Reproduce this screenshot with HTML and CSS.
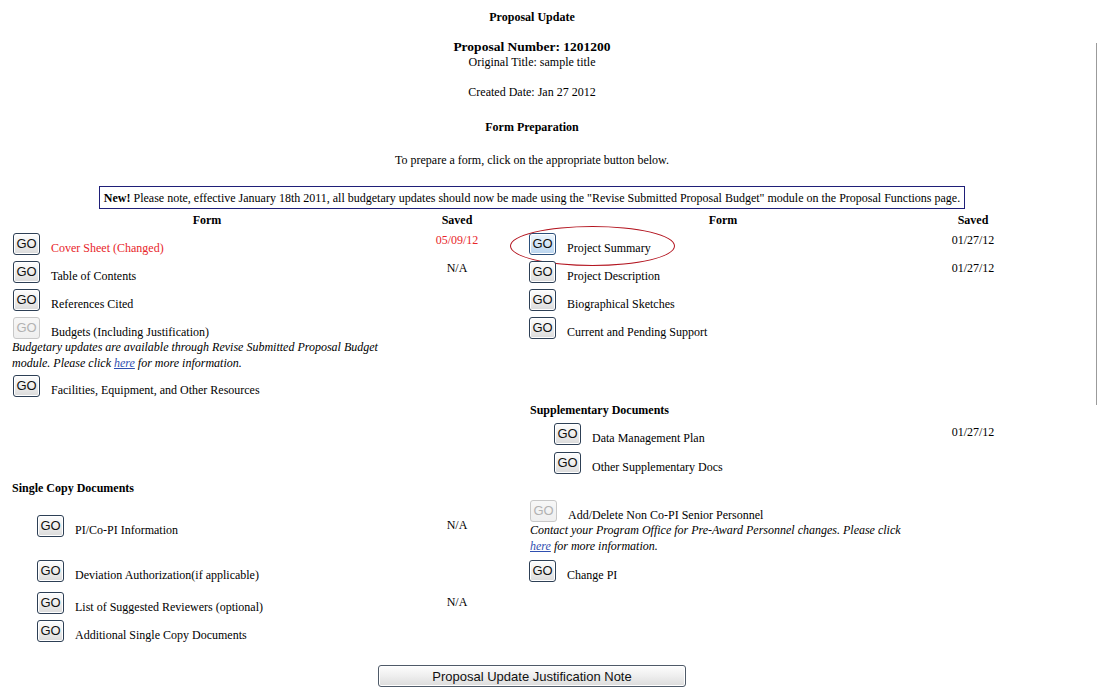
FILE: index.html
```
<!DOCTYPE html>
<html>
<head>
<meta charset="utf-8">
<title>Proposal Update</title>
<link rel="stylesheet" href="styles.css">
</head>
<body>
<div class="page">
  <div class="center title">Proposal Update</div>
  <div class="center number">Proposal Number: 1201200</div>
  <div class="center">Original Title: sample title</div>
  <div class="center created">Created Date: Jan 27 2012</div>
  <div class="center prep">Form Preparation</div>
  <div class="center instr">To prepare a form, click on the appropriate button below.</div>
  <div class="notice-wrap"><div class="notice"><b>New!</b> Please note, effective January 18th 2011, all budgetary updates should now be made using the "Revise Submitted Proposal Budget" module on the Proposal Functions page.</div></div>

  <div class="halves">
    <div class="half">
      <div class="row head"><div>Form</div><div>Saved</div></div>
      <div class="row item">
        <div class="form"><button class="go">GO</button><span class="label red">Cover Sheet (Changed)</span></div>
        <div class="saved red">05/09/12</div>
      </div>
      <div class="row item">
        <div class="form"><button class="go">GO</button><span class="label">Table of Contents</span></div>
        <div class="saved">N/A</div>
      </div>
      <div class="row item">
        <div class="form"><button class="go">GO</button><span class="label">References Cited</span></div>
        <div class="saved"></div>
      </div>
      <div class="row item tight">
        <div class="form"><button class="go" disabled>GO</button><span class="label">Budgets (Including Justification)</span></div>
        <div class="saved"></div>
      </div>
      <div class="note">Budgetary updates are available through Revise Submitted Proposal Budget<br>module. Please click <a href="#">here</a> for more information.</div>
      <div class="row item">
        <div class="form"><button class="go">GO</button><span class="label">Facilities, Equipment, and Other Resources</span></div>
        <div class="saved"></div>
      </div>

      <div class="section single">Single Copy Documents</div>
      <div class="row item sub pi">
        <div class="form"><button class="go">GO</button><span class="label">PI/Co-PI Information</span></div>
        <div class="saved low">N/A</div>
      </div>
      <div class="row item sub dev">
        <div class="form"><button class="go">GO</button><span class="label">Deviation Authorization(if applicable)</span></div>
        <div class="saved"></div>
      </div>
      <div class="row item sub">
        <div class="form"><button class="go">GO</button><span class="label">List of Suggested Reviewers (optional)</span></div>
        <div class="saved low">N/A</div>
      </div>
      <div class="row item sub">
        <div class="form"><button class="go">GO</button><span class="label">Additional Single Copy Documents</span></div>
        <div class="saved"></div>
      </div>
    </div>

    <div class="half">
      <div class="row head"><div>Form</div><div>Saved</div></div>
      <div class="row item">
        <div class="form circled"><button class="go focus">GO</button><span class="label">Project Summary</span><span class="oval"></span></div>
        <div class="saved">01/27/12</div>
      </div>
      <div class="row item">
        <div class="form"><button class="go">GO</button><span class="label">Project Description</span></div>
        <div class="saved">01/27/12</div>
      </div>
      <div class="row item">
        <div class="form"><button class="go">GO</button><span class="label">Biographical Sketches</span></div>
        <div class="saved"></div>
      </div>
      <div class="row item">
        <div class="form"><button class="go">GO</button><span class="label">Current and Pending Support</span></div>
        <div class="saved"></div>
      </div>

      <div class="section supp">Supplementary Documents</div>
      <div class="row item subr dmp">
        <div class="form"><button class="go">GO</button><span class="label">Data Management Plan</span></div>
        <div class="saved mid">01/27/12</div>
      </div>
      <div class="row item subr">
        <div class="form"><button class="go">GO</button><span class="label">Other Supplementary Docs</span></div>
        <div class="saved"></div>
      </div>
      <div class="row item tight adddel">
        <div class="form"><button class="go" disabled>GO</button><span class="label">Add/Delete Non Co-PI Senior Personnel</span></div>
        <div class="saved"></div>
      </div>
      <div class="note rnote">Contact your Program Office for Pre-Award Personnel changes. Please click<br><a href="#">here</a> for more information.</div>
      <div class="row item">
        <div class="form"><button class="go">GO</button><span class="label">Change PI</span></div>
        <div class="saved"></div>
      </div>
    </div>
  </div>

  <button class="justify">Proposal Update Justification Note</button>
</div>
<div class="edge"></div>
</body>
</html>
```

FILE: styles.css
```
html, body {
  background: #ffffff;
}
body {
  margin: 0;
  font-family: "Liberation Serif", "Times New Roman", serif;
  font-size: 12px;
  line-height: 14px;
  color: #000000;
  position: relative;
}
.page {
  width: 1048px;
  margin-left: 8px;
}
.center {
  text-align: center;
}
.title {
  font-weight: bold;
  padding-top: 10px;
}
.number {
  font-weight: bold;
  font-size: 13.5px;
  line-height: 16px;
  margin-top: 15px;
}
.created {
  margin-top: 16px;
}
.prep {
  margin-top: 21px;
  font-weight: bold;
}
.instr {
  margin-top: 19px;
}
.notice-wrap {
  margin-top: 19px;
  text-align: center;
}
.notice {
  display: inline-block;
  border: 1px solid #1f1f78;
  padding: 4px 4px 3px 4px;
}
.halves {
  display: flex;
  gap: 16px;
  margin-top: 4px;
  padding-left: 2px;
}
.half {
  width: 500px;
}
.row {
  display: grid;
  grid-template-columns: 394px 106px;
}
.head {
  font-weight: bold;
  text-align: center;
  margin-bottom: 6px;
}
.item {
  margin-bottom: 6px;
}
.item.tight {
  margin-bottom: 0;
}
.form {
  display: flex;
  align-items: flex-end;
  gap: 11px;
  padding-left: 3px;
  position: relative;
}
.label {
  margin-bottom: 0;
  white-space: nowrap;
}
.saved {
  text-align: center;
}
.saved.low {
  padding-top: 3px;
}
.saved.mid {
  padding-top: 2px;
}
.red {
  color: #e8262a;
}
.go {
  width: 27px;
  height: 22px;
  padding: 0;
  margin: 0;
  font-family: "Liberation Sans", Arial, sans-serif;
  font-size: 13px;
  line-height: 18px;
  color: #111111;
  border: 1px solid #2d3f55;
  border-radius: 3px;
  background: linear-gradient(#fdfdfd, #f0f0f0 45%, #dadada);
  box-shadow: inset 0 0 0 1px #ffffff;
  flex: none;
}
.go.focus {
  border-color: #2b4f7a;
  background: linear-gradient(#eef6fd, #d7e8f8 45%, #b9d4ee);
}
.go:disabled {
  color: #b2b2b2;
  border-color: #c8c8c8;
  background: linear-gradient(#f7f7f7, #efefef);
  box-shadow: none;
}
.note {
  font-style: italic;
  line-height: 16px;
  padding-left: 2px;
  margin-bottom: 4px;
  white-space: nowrap;
}
.note a {
  color: #2f4fb0;
  text-decoration: underline;
}
.rnote {
  padding-left: 4px;
  margin-bottom: 6px;
}
.section {
  font-weight: bold;
}
.single {
  margin-top: 84px;
  margin-bottom: 20px;
  padding-left: 2px;
}
.supp {
  margin-top: 64px;
  margin-bottom: 6px;
  padding-left: 4px;
}
.sub .form {
  padding-left: 27px;
}
.pi {
  margin-bottom: 23px;
}
.dev {
  margin-bottom: 10px;
}
.subr .form {
  padding-left: 28px;
}
.dmp {
  margin-bottom: 7px;
}
.adddel {
  margin-top: 26px;
}
.adddel .form {
  padding-left: 4px;
}
.oval {
  position: absolute;
  left: -16px;
  top: -7px;
  width: 165px;
  height: 40px;
  border: 1px solid #b3141f;
  border-radius: 50%;
  box-sizing: border-box;
  pointer-events: none;
}
.justify {
  display: block;
  margin: 17px auto 0;
  width: 308px;
  height: 22px;
  padding: 0;
  font-family: "Liberation Sans", Arial, sans-serif;
  font-size: 13px;
  color: #111111;
  border: 1px solid #4f5a68;
  border-radius: 3px;
  background: linear-gradient(#fdfdfd, #f0f0f0 45%, #dcdcdc);
  box-shadow: inset 0 0 0 1px #ffffff;
}
.edge {
  position: absolute;
  left: 1096px;
  top: 43px;
  width: 1px;
  height: 362px;
  background: #9b9b9b;
}
```
